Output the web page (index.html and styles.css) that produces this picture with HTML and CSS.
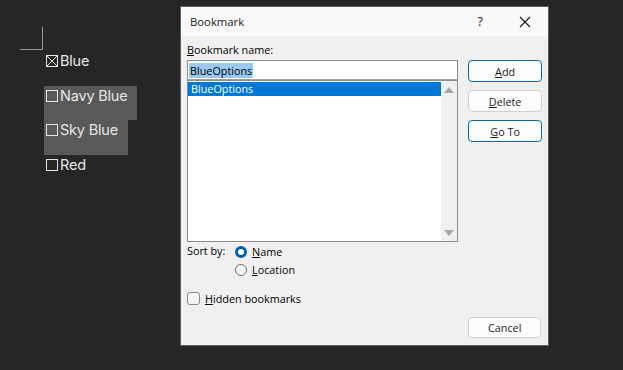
FILE: index.html
```html
<!DOCTYPE html>
<html>
<head>
<meta charset="utf-8">
<link rel="stylesheet" href="styles.css">
</head>
<body>
<div class="doc">
  <div class="corner"></div>
  <div class="rows">
    <div class="row"><span class="cb"><svg width="12" height="12" viewBox="0 0 12 12"><rect x="0.5" y="0.5" width="11" height="11" fill="none" stroke="#e4e4e4"/><path d="M1 1L11 11M11 1L1 11" stroke="#e4e4e4" stroke-width="1"/></svg></span><span class="t">Blue</span></div>
    <div class="row hl"><span class="cb"><svg width="12" height="12" viewBox="0 0 12 12"><rect x="0.5" y="0.5" width="11" height="11" fill="none" stroke="#e4e4e4"/></svg></span><span class="t">Navy Blue</span></div>
    <div class="row hl"><span class="cb"><svg width="12" height="12" viewBox="0 0 12 12"><rect x="0.5" y="0.5" width="11" height="11" fill="none" stroke="#e4e4e4"/></svg></span><span class="t">Sky Blue</span></div>
    <div class="row"><span class="cb"><svg width="12" height="12" viewBox="0 0 12 12"><rect x="0.5" y="0.5" width="11" height="11" fill="none" stroke="#e4e4e4"/></svg></span><span class="t">Red</span></div>
  </div>
</div>

<div class="dialog">
  <div class="titlebar">
    <span class="title">Bookmark</span>
    <span class="help">?</span>
    <span class="close"><svg width="12" height="12" viewBox="0 0 12 12"><path d="M1 1L11 11M11 1L1 11" stroke="#1a1a1a" stroke-width="1.1"/></svg></span>
  </div>
  <div class="content">
    <div class="left">
      <div class="label"><u>B</u>ookmark name:</div>
      <div class="input"><span class="sel">BlueOptions</span></div>
      <div class="list">
        <div class="items"><div class="item">BlueOptions</div></div>
        <div class="scroll">
          <svg width="10" height="6" viewBox="0 0 10 6"><path d="M5 0L10 6H0Z" fill="#a8a8a8"/></svg>
          <svg width="10" height="6" viewBox="0 0 10 6"><path d="M0 0H10L5 6Z" fill="#a8a8a8"/></svg>
        </div>
      </div>
      <div class="sort">
        <span class="sortlbl">Sort by:</span>
        <div class="radios">
          <div class="radio"><span class="rb on"></span><span><u>N</u>ame</span></div>
          <div class="radio"><span class="rb"></span><span><u>L</u>ocation</span></div>
        </div>
      </div>
      <div class="hidden"><span class="chk"></span><span><u>H</u>idden bookmarks</span></div>
    </div>
    <div class="right">
      <div class="btn primary"><span><u>A</u>dd</span></div>
      <div class="btn"><span><u>D</u>elete</span></div>
      <div class="btn primary"><span><u>G</u>o To</span></div>
      <div class="spacer"></div>
      <div class="btn cancel"><span>Cancel</span></div>
    </div>
  </div>
</div>
</body>
</html>
```

FILE: styles.css
```css
html, body {
  margin: 0;
  padding: 0;
  width: 623px;
  height: 370px;
  background: #262626;
  overflow: hidden;
}
.doc {
  padding-top: 27px;
  font-family: Inter, "Open Sans", sans-serif;
}
.corner {
  width: 23px;
  height: 23px;
  margin-left: 20px;
  border-right: 1px solid #9a9a9a;
  border-bottom: 1px solid #9a9a9a;
  box-sizing: border-box;
}
.rows {
  margin-top: 1px;
  margin-left: 44px;
  display: flex;
  flex-direction: column;
  align-items: flex-start;
}
.row {
  height: 34.5px;
  box-sizing: border-box;
  display: flex;
  align-items: center;
  align-self: flex-start;
  padding: 2px 0 0 2px;
  color: #e6e6e6;
  font-size: 14.5px;
  line-height: 16px;
  letter-spacing: -0.2px;
}
.row > * {
  align-self: flex-start;
}
.row .cb {
  display: flex;
  width: 12px;
  height: 12px;
  margin: 2px 2px 0 0;
}
.hl {
  background: #595959;
  padding-right: 10px;
}
.dialog {
  position: absolute;
  left: 180px;
  top: 6px;
  width: 369px;
  height: 340px;
  box-sizing: border-box;
  border: 1px solid #5e5e5e;
  background: #f0f0f0;
  font-family: "Open Sans", "Noto Sans", sans-serif;
  font-size: 10.8px;
  color: #000;
  display: flex;
  flex-direction: column;
}
.titlebar {
  height: 29px;
  background: #f9f9f9;
  display: flex;
  align-items: center;
  padding-left: 9px;
  flex-shrink: 0;
}
.title {
  flex: 1;
  font-size: 11.3px;
  color: #1a1a1a;
}
.help {
  font-size: 12.5px;
  color: #1a1a1a;
  margin-right: 36px;
}
.close {
  display: flex;
  margin-right: 17px;
}
.content {
  flex: 1;
  display: flex;
  padding: 7px 6px 7px 6px;
  gap: 10px;
}
.left {
  width: 272px;
  display: flex;
  flex-direction: column;
}
.label {
  height: 17px;
  line-height: 14px;
}
.input {
  height: 20px;
  box-sizing: border-box;
  border: 1px solid #8d8d8d;
  border-bottom-color: #a0a0a0;
  background: #fff;
  padding: 2px 0 0 1px;
  line-height: 15px;
}
.sel {
  background: #99c9ef;
  padding: 0 1px;
  display: inline-block;
}
.list {
  height: 162px;
  box-sizing: border-box;
  border: 1px solid #8d8d8d;
  background: #fff;
  display: flex;
}
.items {
  flex: 1;
  padding-top: 1px;
}
.item {
  background: #0078d7;
  color: #fff;
  height: 14px;
  line-height: 13px;
  padding-left: 3px;
}
.scroll {
  width: 16px;
  background: #f0f0f0;
  display: flex;
  flex-direction: column;
  justify-content: space-between;
  align-items: center;
  padding: 6px 0 5px;
}
.sort {
  display: flex;
  margin-top: 4px;
}
.sortlbl {
  width: 48px;
  line-height: 14px;
  margin-top: -2px;
}
.radios {
  display: flex;
  flex-direction: column;
  gap: 6px;
}
.radio {
  display: flex;
  align-items: center;
  gap: 5px;
  height: 12px;
  line-height: 14px;
}
.rb {
  width: 12px;
  height: 12px;
  box-sizing: border-box;
  border-radius: 50%;
  border: 1px solid #6b6b6b;
  background: #fdfdfd;
}
.rb.on {
  border: 3.5px solid #005fb8;
  background: #fff;
}
.hidden {
  display: flex;
  align-items: center;
  gap: 5px;
  margin-top: 16px;
  height: 13px;
}
.chk {
  width: 13px;
  height: 13px;
  box-sizing: border-box;
  border: 1px solid #8a8a8a;
  border-radius: 3px;
  background: #f7f7f7;
}
.right {
  width: 74px;
  display: flex;
  flex-direction: column;
  padding-top: 17px;
  gap: 8px;
}
.btn {
  height: 22px;
  box-sizing: border-box;
  border: 1px solid #d0d0d0;
  border-radius: 4px;
  background: #fdfdfd;
  display: flex;
  align-items: center;
  justify-content: center;
  color: #1a1a1a;
}
.btn.primary {
  border-color: #0067c0;
}
.spacer {
  flex: 1;
}
.cancel {
  height: 21px;
  width: 73px;
}
```
